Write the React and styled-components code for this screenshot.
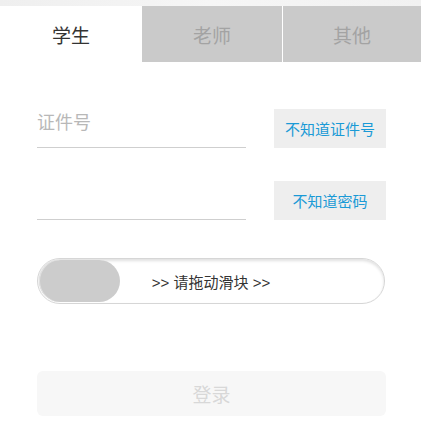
import React from 'react';
import styled, { createGlobalStyle } from 'styled-components';

const GlobalStyle = createGlobalStyle`
  html, body {
    margin: 0;
    padding: 0;
    background: #fff;
  }
  body {
    font-family: "Liberation Sans", "Noto Sans CJK SC", sans-serif;
  }
`;

const Page = styled.div`
  width: 421px;
  min-height: 432px;
  background: #fff;
`;

const TopStrip = styled.div`
  height: 6px;
  background: linear-gradient(90deg, #efefef 0%, #f6f6f6 50%, #f1f1f1 100%);
`;

const Tabs = styled.div`
  display: grid;
  grid-template-columns: 142px 140px 139px;
  height: 56px;
`;

const Tab = styled.div`
  display: flex;
  align-items: center;
  justify-content: center;
  font-size: 19px;
  color: ${p => (p.$active ? '#333' : '#a3a3a3')};
  background: ${p => (p.$active ? '#fff' : '#cacaca')};
  border-left: ${p => (p.$divider ? '1px solid #fff' : 'none')};
`;

const Form = styled.div`
  padding: 0 35px 0 37px;
`;

const Row = styled.div`
  display: flex;
  align-items: flex-end;
  justify-content: space-between;
  margin-top: ${p => p.$top}px;
`;

const Input = styled.input`
  width: 209px;
  height: 47px;
  box-sizing: content-box;
  padding: 0;
  border: none;
  border-bottom: 1px solid #cfcfcf;
  outline: none;
  font-family: inherit;
  font-size: 18px;
  color: #333;
  background: transparent;

  &::placeholder {
    color: #b8b8b8;
  }
`;

const HelpButton = styled.button`
  width: 112px;
  height: 39px;
  border: none;
  background: #eeeeee;
  color: #1a9ad6;
  font-family: inherit;
  font-size: 15px;
  padding: 0;
  cursor: pointer;
`;

const Slider = styled.div`
  position: relative;
  margin-top: 38px;
  height: 46px;
  width: 348px;
  box-sizing: border-box;
  border: 1px solid #d6d6d6;
  border-radius: 23px;
  background: #fff;
  box-shadow: inset 0 2px 3px rgba(0, 0, 0, 0.12);
  display: flex;
  align-items: center;
  justify-content: center;
  font-size: 15px;
  color: #333;
`;

const Knob = styled.div`
  position: absolute;
  left: 1px;
  top: 1px;
  width: 81px;
  height: 42px;
  border-radius: 21px;
  background: #cccccc;
  box-shadow: inset 1px 0 0 #e2e2e2;
`;

const LoginButton = styled.button`
  display: block;
  margin-top: 67px;
  width: 349px;
  height: 45px;
  border: none;
  border-radius: 6px;
  background: #f7f7f7;
  color: #d8d8d8;
  font-family: inherit;
  font-size: 19px;
  padding: 0;
`;

const App = () => (
  <Page>
    <GlobalStyle />
    <TopStrip />
    <Tabs>
      <Tab $active>学生</Tab>
      <Tab>老师</Tab>
      <Tab $divider>其他</Tab>
    </Tabs>
    <Form>
      <Row $top={38}>
        <Input placeholder="证件号" />
        <HelpButton>不知道证件号</HelpButton>
      </Row>
      <Row $top={24}>
        <Input type="password" />
        <HelpButton>不知道密码</HelpButton>
      </Row>
      <Slider>
        <Knob />
        &gt;&gt; 请拖动滑块 &gt;&gt;
      </Slider>
      <LoginButton>登录</LoginButton>
    </Form>
  </Page>
);

export default App;
